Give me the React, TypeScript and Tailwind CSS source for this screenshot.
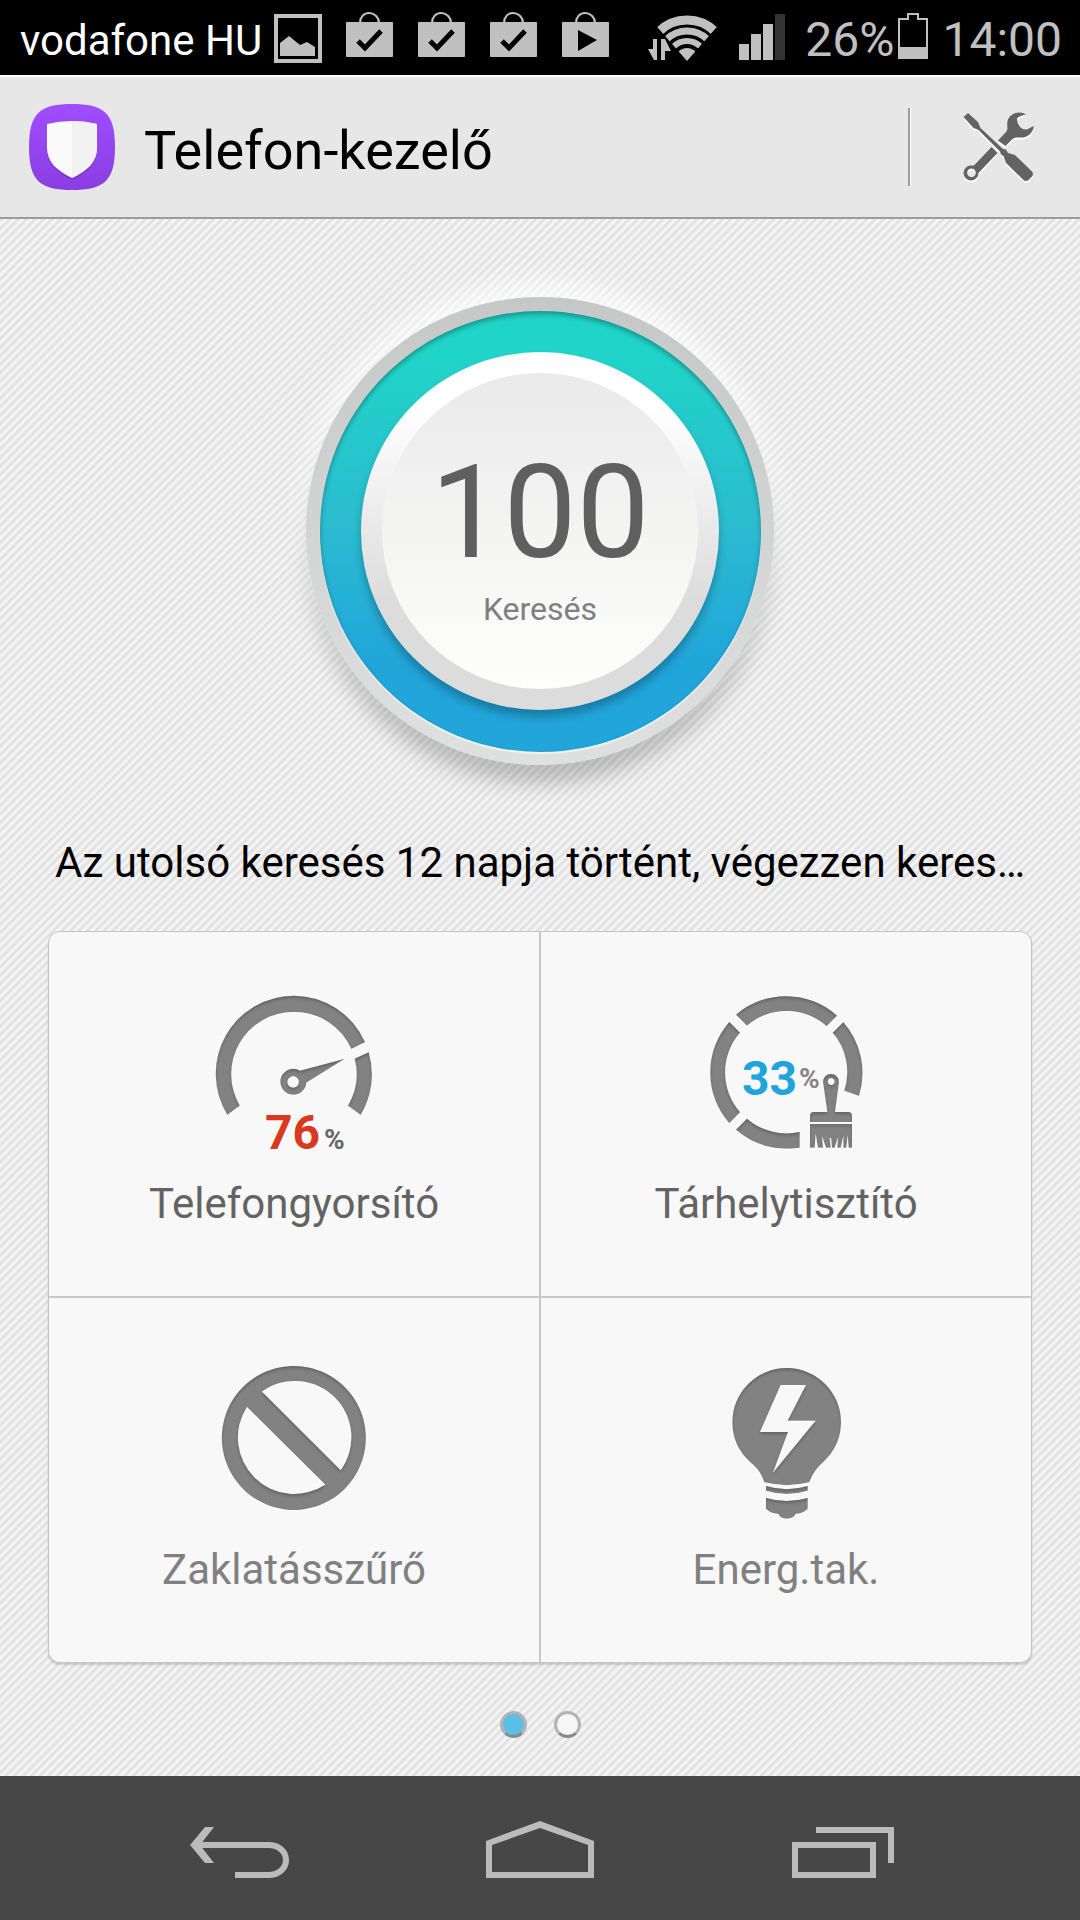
import React, { useState } from 'react';

const ROBOTO = "font-[Roboto,'Noto_Sans',sans-serif]";

function BagIcon({ kind }: { kind: 'check' | 'play' }) {
  return (
    <svg className="w-12 h-[60px] shrink-0" viewBox="0 0 48 60" aria-hidden="true">
      <path d="M14 13C14 7 18 3 23 3S33 7 33 13" fill="none" stroke="#c0c0c0" strokeWidth="2" />
      <rect x="0" y="12" width="47" height="35" rx="1" fill="#c0c0c0" />
      {kind === 'check' ? (
        <path d="M12 31L19 38L35 21" fill="none" stroke="#000" strokeWidth="5" />
      ) : (
        <path d="M16 20L35 30L16 41Z" fill="#000" />
      )}
    </svg>
  );
}

function StatusBar() {
  return (
    <div className="flex h-[75px] items-center justify-between bg-black pt-[5px] pl-5 pr-[18px] whitespace-nowrap">
      <div className="flex items-center gap-6">
        <div className="flex items-center gap-3">
          <span className="text-[42px] text-white">vodafone HU</span>
          <svg className="w-12 h-[60px] shrink-0" viewBox="0 0 48 60" aria-hidden="true">
            <rect x="2" y="6" width="44" height="45" fill="none" stroke="#c0c0c0" strokeWidth="4" />
            <path d="M6 46V33L15 26L26 35L33 32L41 37V46Z" fill="#c0c0c0" />
          </svg>
        </div>
        <BagIcon kind="check" />
        <BagIcon kind="check" />
        <BagIcon kind="check" />
        <BagIcon kind="play" />
      </div>

      <div className="flex items-center gap-5 text-5xl text-[#c0c0c0]">
        <svg className="w-[72px] h-[60px] shrink-0" viewBox="0 0 72 60" aria-hidden="true">
          <clipPath id="wifi-fan">
            <path d="M40 51L4 10V0H76V10Z" />
          </clipPath>
          <g clipPath="url(#wifi-fan)" fill="none" stroke="#c0c0c0">
            <circle cx="40" cy="50" r="40" strokeWidth="9" />
            <circle cx="40" cy="50" r="29" strokeWidth="7" />
            <circle cx="40" cy="50" r="19" strokeWidth="6" />
            <circle cx="40" cy="50" r="6" strokeWidth="12" />
          </g>
          <path d="M6 29H10V50H7L1 39H6Z" fill="#c0c0c0" />
          <path d="M14 50V29H18L24 41H18V50Z" fill="#c0c0c0" />
        </svg>
        <svg className="w-[46px] h-[60px] shrink-0" viewBox="0 0 46 60" aria-hidden="true">
          <rect x="0" y="34" width="10" height="16" fill="#c0c0c0" />
          <rect x="12" y="24" width="10" height="26" fill="#c0c0c0" />
          <rect x="24" y="14" width="10" height="36" fill="#c0c0c0" />
          <rect x="36" y="4" width="10" height="46" fill="#333" />
        </svg>
        <div className="flex items-center gap-3.5">
          <div className="flex items-center gap-1">
            <span>26%</span>
            <svg className="w-[30px] h-[60px] shrink-0" viewBox="0 0 30 60" aria-hidden="true">
              <path d="M1 48V9H10V4H20V9H29V48Z" fill="none" stroke="#c0c0c0" strokeWidth="2" />
              <rect x="0" y="37" width="30" height="12" fill="#c0c0c0" />
            </svg>
          </div>
          <span>14:00</span>
        </div>
      </div>
    </div>
  );
}

function Header() {
  return (
    <header className="flex items-center border-t-2 border-b-2 border-t-white border-b-[#9b9b9b] bg-[#e7e7e7] h-36 pl-[29px]">
      <svg className="w-[86px] h-[86px] shrink-0" viewBox="0 0 86 86" aria-hidden="true">
        <defs>
          <linearGradient id="badge" x1="0" y1="0" x2="0" y2="1">
            <stop offset="0" stopColor="#a04dff" />
            <stop offset="1" stopColor="#8a3ee0" />
          </linearGradient>
        </defs>
        <path d="M43 0C74 0 86 8 86 43S74 86 43 86S0 78 0 43S12 0 43 0Z" fill="url(#badge)" />
        <path d="M18 22Q43 15 68 22V46C68 60 58 69 43 76C28 69 18 60 18 46Z" fill="#5d1fae" opacity="0.4" />
        <path d="M18 20Q43 14 68 20V44C68 58 58 67 43 74C28 67 18 58 18 44Z" fill="#fafafa" />
        <path d="M43 17Q56 17 68 20V44C68 58 58 67 43 74Z" fill="#f1f1f1" />
      </svg>
      <h1 className="flex-1 pl-[29px] pt-1.5 text-[54px] text-black whitespace-nowrap">Telefon-kezelő</h1>
      <div className="h-[78px] w-[3px] border-l-2 border-r border-l-[#9b9b9b] border-r-white" />
      <button type="button" aria-label="Eszközök" className="flex h-full w-[169px] items-center justify-center">
        <svg className="w-[76px] h-[76px] drop-shadow-[0_2px_0_#fff]" viewBox="-3 0 76 76" fill="#636363" aria-hidden="true">
          <path d="M65 5.5C60 1.500 49 3 46.500 12C45.500 17 47.500 20 45 23L37 31.500L44.500 37L51.500 30C55 27.500 58 29 62 28.500C68 27.500 73 22 72.500 17L66 20.500Q62 21 59 18Q55.500 14 56 9.500Q58 7 65 5.500Z" />
          <path
            fillRule="evenodd"
            d="M30.500 38L36.500 44L17.500 64A7.500 7.500 0 1 1 10 56.500L13 56.500ZM10.400 59.500A4.300 4.300 0 1 0 10.500 59.500Z"
          />
          <path d="M2.500 8L7 4L17 13L19.500 19L42 40L45 40.500L47 44L54 46L71 62.500Q73 65 71 67.500L67 71.500Q64.500 72.500 62.500 71L45 54L42.500 47L40 45.500L39 42.500L17.500 21L12.500 19Z" />
        </svg>
      </button>
    </header>
  );
}

function ScoreDial() {
  return (
    <button
      type="button"
      className="flex size-[468px] shrink-0 items-center justify-center rounded-full bg-linear-to-b from-[#c6c8c8] to-[#dfe1e1] shadow-[0_-14px_30px_rgba(255,255,255,0.8),0_20px_22px_-4px_rgba(0,0,0,0.25)]"
    >
      <span className="flex size-[441px] items-center justify-center rounded-full bg-linear-to-b from-[#20d4c8] from-10% via-[#2bbbd0] to-[#21a5da] to-80% shadow-[inset_0_3px_5px_rgba(0,0,0,0.3),0_2px_1px_rgba(255,255,255,0.6)]">
        <span className="flex size-[358px] items-center justify-center rounded-full bg-linear-to-b from-white from-15% to-[#dcdcdc] to-70% shadow-[0_7px_9px_rgba(0,0,0,0.25)]">
          <span className="flex size-[316px] flex-col items-center rounded-full bg-linear-to-b from-[#eaeaea] to-[#fefefd] pt-16">
            <span className="text-[130px] leading-[152px] text-[#5f5f5f]">100</span>
            <span className="text-[32px] leading-10 text-[#808080]">Keresés</span>
          </span>
        </span>
      </span>
    </button>
  );
}

// Shared engraved look of the tile drawings
function EngraveFilter() {
  return (
    <svg className="absolute size-0" aria-hidden="true">
      <filter id="engrave" x="-5%" y="-5%" width="110%" height="110%">
        <feOffset in="SourceAlpha" dy="7" result="down" />
        <feGaussianBlur in="down" stdDeviation="4" result="soft" />
        <feComposite in="SourceAlpha" in2="soft" operator="out" result="edge" />
        <feFlood floodColor="#000" floodOpacity="0.45" />
        <feComposite in2="edge" operator="in" result="shade" />
        <feOffset in="SourceAlpha" dy="4" result="low" />
        <feFlood floodColor="#fff" />
        <feComposite in2="low" operator="in" result="light" />
        <feMerge>
          <feMergeNode in="light" />
          <feMergeNode in="SourceGraphic" />
          <feMergeNode in="shade" />
        </feMerge>
      </filter>
    </svg>
  );
}

function GaugeIcon() {
  return (
    <>
      <svg className="size-40" viewBox="255 90 480 480" fill="#828282" aria-hidden="true">
        <g filter="url(#engrave)">
          <path d="M295 459A235 235 0 0 1 495 101A235 235 0 0 1 708 241L667 261A187 187 0 0 0 495 150A187 187 0 0 0 332 431Z" />
          <path d="M719 271A235 235 0 0 1 695 459L657 431A187 187 0 0 0 677 290Z" />
          <path
            fillRule="evenodd"
            d="M513 326L646 291L532 362A39 39 0 1 1 513 326ZM492 343A17 17 0 1 0 493 343Z"
          />
        </g>
      </svg>
      <span className="absolute -bottom-2 left-[51px] flex items-baseline gap-1 font-bold">
        <span className="text-5xl leading-10 text-[#d8391f]">76</span>
        <span className="text-[28px] leading-10 text-[#666]">%</span>
      </span>
    </>
  );
}

function BrushIcon() {
  return (
    <>
      <svg className="size-40" viewBox="228 90 480 480" fill="#828282" aria-hidden="true">
        <g filter="url(#engrave)">
          <path d="M318 158A230 230 0 0 1 621 161L590 193A182 182 0 0 0 351 191Z" />
          <path d="M640 181A230 230 0 0 1 687 402L643 386A182 182 0 0 0 608 212Z" />
          <path d="M298 180L330 212A182 182 0 0 0 330 451L298 484A230 230 0 0 1 298 180Z" />
          <path d="M318 503L351 470A182 182 0 0 0 509 510V557A230 230 0 0 1 318 503Z" />
          <path
            fillRule="evenodd"
            d="M579 360A24 24 0 0 1 627 360L615 450H654Q666 450 666 462V480H540V462Q540 450 552 450H592ZM603 349A10 10 0 1 0 604 349Z"
          />
          <path d="M540 486H666V557H656L653 520L649 557H640V522L632 557H622L624 526L614 557H606L603 528L599 528L602 557H588L576 522L579 557H564L557 516L554 557H540Z" />
        </g>
      </svg>
      <span className="absolute top-[67px] left-[36px] flex items-center gap-0.5 font-bold">
        <span className="text-5xl leading-10 text-[#1fa5db]">33</span>
        <span className="text-[28px] leading-10 text-[#858585]">%</span>
      </span>
    </>
  );
}

function BlockIcon() {
  return (
    <svg className="size-40" viewBox="255 90 480 480" fill="#828282" aria-hidden="true">
      <path
        filter="url(#engrave)"
        fillRule="evenodd"
        d="M495 114A216 216 0 1 1 494 114ZM399 191L635 427A169 169 0 0 0 399 191ZM354 237A169 169 0 0 0 589 470Z"
      />
    </svg>
  );
}

function BulbIcon() {
  return (
    <svg className="size-40 overflow-visible" viewBox="228 90 480 480" fill="#828282" aria-hidden="true">
      <g filter="url(#engrave)">
        <path
          fillRule="evenodd"
          d="M403 463C395 440 385 422 360 402C325 370 307 330 307 283A163 163 0 0 1 633 283C633 330 615 370 580 402C558 422 547 440 538 463Q470 480 403 463ZM452 171L390 312H474L429 434L557 278H473L528 171Z"
        />
        <path d="M408 474Q470 493 533 474V488Q470 508 408 488Z" />
        <path d="M408 510Q470 528 533 510V542Q520 556 496 558Q494 571 470 572Q448 571 446 558Q420 556 408 542Z" />
      </g>
    </svg>
  );
}

const tiles = [
  { label: 'Telefongyorsító', icon: <GaugeIcon />, color: 'text-[#636363]' },
  { label: 'Tárhelytisztító', icon: <BrushIcon />, color: 'text-[#636363]' },
  { label: 'Zaklatásszűrő', icon: <BlockIcon />, color: 'text-[#808080]' },
  { label: 'Energ.tak.', icon: <BulbIcon />, color: 'text-[#808080]' },
];

function NavBar() {
  return (
    <nav className="grid h-36 grid-cols-3 bg-[#474747] px-[90px]">
      <button type="button" aria-label="Vissza" className="flex items-center justify-center">
        <svg className="w-[108px] h-[60px]" viewBox="0 0 108 60" aria-hidden="true">
          <path d="M8 27H82C106 27 106 57 82 57H49" fill="none" stroke="#bbb" strokeWidth="6" />
          <path d="M4 27L19 9H28L14 27L28 45H19Z" fill="#bbb" />
        </svg>
      </button>
      <button type="button" aria-label="Kezdőlap" className="flex items-center justify-center">
        <svg className="w-[108px] h-[60px]" viewBox="0 0 108 60" aria-hidden="true">
          <path fillRule="evenodd" d="M0 23L54 3L108 23V60H0ZM6 27V54H102V27L54 10Z" fill="#bbb" />
        </svg>
      </button>
      <button type="button" aria-label="Legutóbbiak" className="flex items-center justify-center">
        <svg className="w-[108px] h-[60px]" viewBox="0 0 108 60" aria-hidden="true">
          <path fillRule="evenodd" d="M6 24H90V60H6ZM12 30V54H84V30Z" fill="#bbb" />
          <path d="M30 9H108V45H102V15H30Z" fill="#bbb" />
        </svg>
      </button>
    </nav>
  );
}

export default function App() {
  const [page, setPage] = useState(0);

  return (
    <div className={`flex min-h-screen flex-col ${ROBOTO}`}>
      <StatusBar />
      <Header />

      <main className="flex flex-1 flex-col items-center bg-[repeating-linear-gradient(135deg,#e2e2e2_0px,#e2e2e2_2px,#f4f4f4_3px,#f4f4f4_5px,#e2e2e2_6px)] px-12 pt-[78px]">
        <ScoreDial />
        <p className="mt-[70px] max-w-full truncate text-center text-[42px] leading-14 text-black">
          Az utolsó keresés 12 napja történt, végezzen keres…
        </p>

        <EngraveFilter />
        <div className="mt-10 grid w-full grid-cols-2 gap-0.5 overflow-hidden rounded-xl border border-[#c4c4c4] bg-[#c8c8c8] shadow-[0_2px_2px_rgba(0,0,0,0.15)]">
          {tiles.map((tile) => (
            <button key={tile.label} type="button" className="flex h-[364px] flex-col items-center bg-[#f8f8f8] pt-15">
              <span className="relative block">{tile.icon}</span>
              <span className={`mt-6 text-[42px] leading-14 ${tile.color}`}>{tile.label}</span>
            </button>
          ))}
        </div>

        <div className="mt-12 mb-9 flex gap-[27px]">
          {[0, 1].map((i) => (
            <button
              key={i}
              type="button"
              aria-label={`${i + 1}. oldal`}
              onClick={() => setPage(i)}
              className={`size-[27px] rounded-full border-3 border-[#b4b4b4] border-b-[#8a8a8a] ${
                i === page ? 'bg-[#5bbfe6]' : 'bg-[#f6f6f6]'
              }`}
            />
          ))}
        </div>
      </main>

      <NavBar />
    </div>
  );
}
